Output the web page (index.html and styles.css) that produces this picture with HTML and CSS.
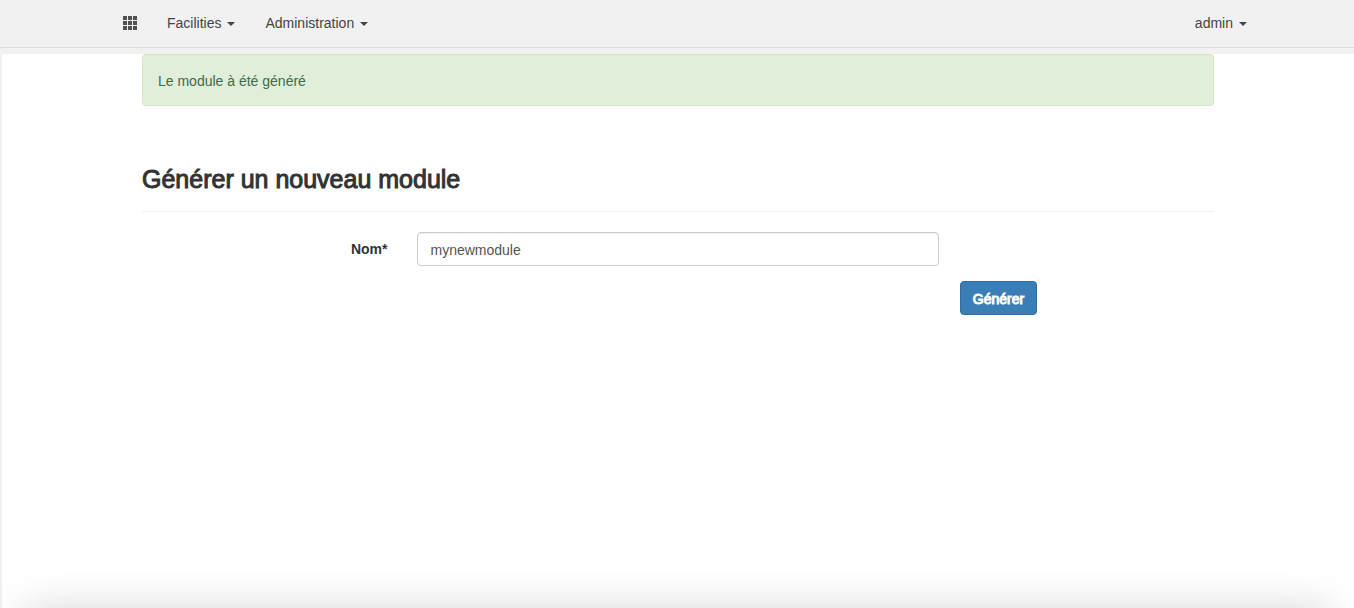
FILE: index.html
```html
<!DOCTYPE html>
<html lang="fr">
<head>
<meta charset="utf-8">
<meta name="viewport" content="width=device-width, initial-scale=1">
<title>Générer un nouveau module</title>
<link rel="stylesheet" href="styles.css">
</head>
<body>
<header class="navbar">
  <nav class="navbar-inner">
    <a class="nav-link" href="#" aria-label="Modules">
      <svg class="grid-icon" viewBox="0 0 14 14" aria-hidden="true">
        <path d="M0 0h4v4H0zM5 0h4v4H5zM10 0h4v4h-4zM0 5h4v4H0zM5 5h4v4H5zM10 5h4v4h-4zM0 10h4v4H0zM5 10h4v4H5zM10 10h4v4h-4z"/>
      </svg>
    </a>
    <a class="nav-link" href="#">Facilities <span class="caret"></span></a>
    <a class="nav-link" href="#">Administration <span class="caret"></span></a>
    <a class="nav-link nav-user" href="#">admin <span class="caret"></span></a>
  </nav>
</header>
<main class="page">
  <div class="content">
    <div class="alert" role="status">Le module à été généré</div>
    <h1 class="title">Générer un nouveau module</h1>
    <form class="form">
      <div class="row">
        <label class="label" for="name">Nom*</label>
        <input class="input" id="name" type="text" value="mynewmodule">
      </div>
      <div class="actions">
        <button class="button" type="button">Générer</button>
      </div>
    </form>
  </div>
</main>
<div class="bottom-shadow"></div>
</body>
</html>
```
FILE: styles.css
```css
* {
  box-sizing: border-box;
}

body {
  margin: 0;
  min-height: 100vh;
  display: flex;
  flex-direction: column;
  overflow-x: hidden;
  background: #f1f1f1;
  color: #333;
  font: 14px/20px "Liberation Sans", Arial, sans-serif;
}

.navbar {
  border-bottom: 1px solid #ddd;
  margin-bottom: 6px;
}

.navbar-inner {
  display: flex;
  align-items: center;
  max-width: 1170px;
  height: 47px;
  margin: 0 auto;
  padding: 0 0 2px 16px;
}

.nav-link {
  display: flex;
  align-items: center;
  gap: 6px;
  padding: 0 15px;
  color: #444;
  text-decoration: none;
}

.nav-user {
  margin-left: auto;
}

.grid-icon {
  width: 14px;
  height: 14px;
  fill: #505050;
}

.caret {
  margin-top: 2px;
  border-top: 4px solid #444;
  border-left: 4px solid transparent;
  border-right: 4px solid transparent;
}

.page {
  flex: 1;
  margin-left: 2px;
  background: #fff;
}

.content {
  max-width: 1072px;
  margin: 0 auto;
}

.alert {
  padding: 16px 15px 14px;
  border: 1px solid #d6e4c0;
  border-radius: 4px;
  background: #e1eed9;
  color: #3f6b46;
}

.title {
  margin: 60px 0 20px;
  padding-bottom: 18px;
  border-bottom: 1px solid #eee;
  font-size: 25px;
  line-height: 27px;
  font-weight: 400;
  -webkit-text-stroke: 1px #333;
}

.row {
  display: grid;
  grid-template-columns: 22.9% 1fr 22.9%;
  column-gap: 30px;
  margin-bottom: 15px;
}

.label {
  padding-top: 7px;
  font-weight: 700;
  text-align: right;
}

.input {
  grid-column: 2;
  width: 100%;
  height: 34px;
  padding: 7px 12px 5px;
  border: 1px solid #ccc;
  border-radius: 4px;
  background: #fff;
  box-shadow: inset 0 1px 1px rgba(0, 0, 0, .075);
  color: #555;
  font: inherit;
}

.actions {
  display: flex;
  justify-content: flex-end;
  padding-right: 16.5%;
}

.button {
  padding: 7px 12px 5px;
  border: 1px solid #2e6da4;
  border-radius: 4px;
  background: #3b7db5;
  color: #fff;
  font: inherit;
  -webkit-text-stroke: 1px #fff;
}

.bottom-shadow {
  position: fixed;
  right: 24px;
  bottom: -40px;
  left: 24px;
  height: 40px;
  box-shadow: 0 0 40px rgba(0, 0, 0, .16);
}
```
